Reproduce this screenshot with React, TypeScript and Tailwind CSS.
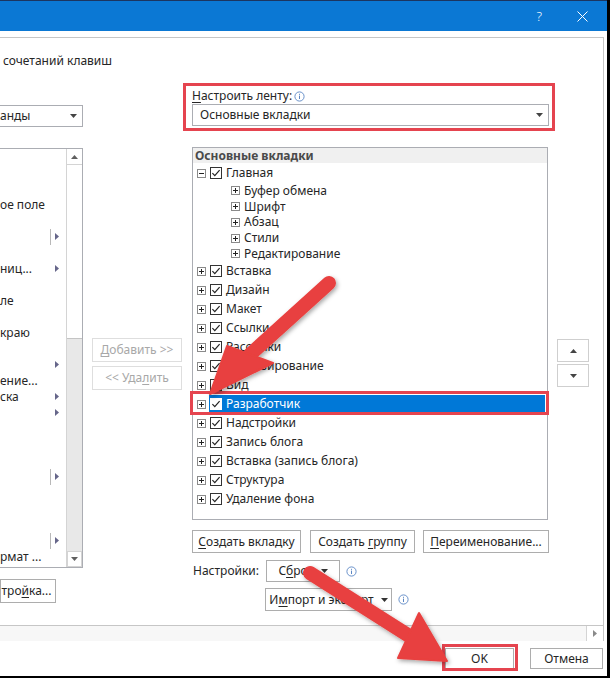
import React from 'react';

const Info = () => (
  <svg width="11" height="11" viewBox="0 0 11 11" className="shrink-0">
    <circle cx="5.5" cy="5.5" r="4.6" fill="none" stroke="#5a86c4" strokeWidth="0.9" />
    <rect x="5" y="4.6" width="1" height="3.4" fill="#5a86c4" />
    <rect x="5" y="2.8" width="1" height="1" fill="#5a86c4" />
  </svg>
);

const Down = ({ c = '#444' }: { c?: string }) => (
  <svg width="7" height="4" viewBox="0 0 7 4" className="shrink-0">
    <path d="M0 0 L7 0 L3.5 4 Z" fill={c} />
  </svg>
);

const Up = ({ c = '#444' }: { c?: string }) => (
  <svg width="7" height="4" viewBox="0 0 7 4" className="shrink-0">
    <path d="M0 4 L7 4 L3.5 0 Z" fill={c} />
  </svg>
);

const Right = ({ c = '#66668a' }: { c?: string }) => (
  <svg width="4" height="7" viewBox="0 0 4 7" className="shrink-0">
    <path d="M0 0 L4 3.5 L0 7 Z" fill={c} />
  </svg>
);

const Exp = ({ open = false }: { open?: boolean }) => (
  <svg width="9" height="9" viewBox="0 0 9 9" className="shrink-0">
    <rect x="0.5" y="0.5" width="8" height="8" fill="#fff" stroke="#8a8a8a" />
    <rect x="2" y="4" width="5" height="1" fill="#222" />
    {!open && <rect x="4" y="2" width="1" height="5" fill="#222" />}
  </svg>
);

const Check = ({ sel = false }: { sel?: boolean }) => (
  <svg width="12" height="12" viewBox="0 0 12 12" className="shrink-0">
    <rect x="0.5" y="0.5" width="11" height="11" fill="#fff" stroke={sel ? '#fff' : '#333'} />
    <path d="M2.4 6.2 L4.8 8.6 L9.6 3.2" fill="none" stroke="#222" strokeWidth="1.2" />
  </svg>
);

const U = ({ children }: { children: React.ReactNode }) => <span className="underline underline-offset-2">{children}</span>;

const Btn = ({ children, w, dis = false }: { children: React.ReactNode; w: string; dis?: boolean }) => (
  <div
    className={`${w} h-full flex items-center justify-center gap-[7px] border bg-white ${
      dis ? 'border-[#dedede] text-[#a8a8a8]' : 'border-[#adadad] text-[#262626]'
    }`}
  >
    {children}
  </div>
);

const top = [
  'Вставка',
  'Дизайн',
  'Макет',
  'Ссылки',
  'Рассылки',
  'Рецензирование',
  'Вид',
  'Разработчик',
  'Надстройки',
  'Запись блога',
  'Вставка (запись блога)',
  'Структура',
  'Удаление фона',
];

const subs = ['Буфер обмена', 'Шрифт', 'Абзац', 'Стили', 'Редактирование'];

// visible bits of the command list, 16px rows
const leftRows: { t?: string; arrow?: boolean; line?: boolean }[] = [
  {}, {}, {},
  { t: 'ое поле' },
  {},
  { arrow: true, line: true },
  {},
  { t: 'ниц...', arrow: true },
  {},
  { t: 'ле' },
  {},
  { t: 'краю' },
  {},
  { arrow: true },
  { t: 'ение...' },
  { t: 'ска', arrow: true },
  { arrow: true },
  {}, {}, {},
  { arrow: true, line: true },
  {}, {}, {},
  { arrow: true, line: true },
  { t: 'рмат ...' },
];

type P = [number, number];

const Arrow = ({ tail, tip, w1, w2 }: { tail: P; tip: P; w1: P; w2: P }) => {
  const mx = (w1[0] + w2[0]) / 2;
  const my = (w1[1] + w2[1]) / 2;
  return (
    <>
      <line x1={tail[0]} y1={tail[1]} x2={mx} y2={my} strokeWidth="14" strokeLinecap="round" />
      <polygon points={`${tip[0]},${tip[1]} ${w1[0]},${w1[1]} ${w2[0]},${w2[1]}`} strokeWidth="2" strokeLinejoin="round" />
    </>
  );
};

const Arrows = () => (
  <svg width="610" height="678" className="absolute left-0 top-0 pointer-events-none">
    <defs>
      <filter id="sh" x="-20%" y="-20%" width="140%" height="140%">
        <feDropShadow dx="1.5" dy="2" stdDeviation="2" floodColor="#000" floodOpacity="0.35" />
      </filter>
    </defs>
    <g filter="url(#sh)" fill="#e8403f" stroke="#e8403f">
      <Arrow tail={[329, 283]} tip={[210, 394]} w1={[227, 346]} w2={[273, 363]} />
      <Arrow tail={[310, 573]} tip={[447, 661]} w1={[419, 613]} w2={[398, 658]} />
    </g>
  </svg>
);

export default function App() {
  return (
    <div className="relative w-[610px] h-[678px] overflow-hidden bg-white border-r-[3px] border-b-[2px] border-black font-['Noto_Sans',sans-serif] text-[12px] leading-none text-[#262626]">
      {/* title bar */}
      <div className="h-[31px] bg-[#0b78d4] border-t border-[#1c3560] flex items-center justify-end text-white">
        <span className="text-[13px] mr-[35px] font-light">?</span>
        <svg width="11" height="11" viewBox="0 0 11 11" className="mr-[19px]">
          <path d="M0.5 0.5 L10.5 10.5 M10.5 0.5 L0.5 10.5" stroke="#fff" strokeWidth="1" />
        </svg>
      </div>

      {/* main pane */}
      <div className="mt-[6px] w-[604px] h-[604px] border-t border-r border-[#c6c6c6] flex flex-col">
        <div className="mt-[14px] h-[18px] pl-[3px] flex items-center">сочетаний клавиш</div>

        <div className="mt-[14px] flex">
          {/* left column */}
          <div className="w-[83px] flex flex-col">
            <div className="mt-[21px] h-[22px] border border-[#abadb3] border-l-0 flex items-center justify-between pr-[5px]">
              <span>анды</span>
              <Down />
            </div>
            <div className="mt-[21px] h-[420px] border border-[#abadb3] border-l-0 flex">
              <div className="flex-1 flex flex-col">
                {leftRows.map((r, i) => (
                  <div key={i} className="h-[16px] flex items-center relative">
                    {r.t && <span className="whitespace-nowrap">{r.t}</span>}
                    {r.line && <span className="absolute left-[50px] top-0 w-px h-[16px] bg-[#b8b8b8]" />}
                    {r.arrow && (
                      <span className="absolute left-[55px] top-[4px]">
                        <Right />
                      </span>
                    )}
                  </div>
                ))}
              </div>
              <div className="w-[16px] border-l border-[#d4d4d4] bg-[#e8e8e8] flex flex-col">
                <div className="h-[16px] bg-white flex items-center justify-center border-b border-[#d4d4d4]">
                  <Up c="#606060" />
                </div>
                <div className="h-[174px] bg-white border-b border-[#c4c4c4]" />
                <div className="flex-1" />
                <div className="h-[16px] bg-white border border-[#d4d4d4] flex items-center justify-center">
                  <Down c="#606060" />
                </div>
              </div>
            </div>
            <div className="mt-[11px] h-[24px] w-[56px]">
              <Btn w="w-full">
                <span className="-ml-[3px]">
                  тро<U>й</U>ка...
                </span>
              </Btn>
            </div>
          </div>

          {/* middle column */}
          <div className="w-[109px] flex flex-col pl-[9px] pt-[254px] gap-[4px]">
            <div className="h-[24px]">
              <Btn w="w-[90px]" dis>
                <span>
                  <U>Д</U>обавить &gt;&gt;
                </span>
              </Btn>
            </div>
            <div className="h-[24px]">
              <Btn w="w-[90px]" dis>
                <span>
                  &lt;&lt; Уда<U>л</U>ить
                </span>
              </Btn>
            </div>
          </div>

          {/* right column */}
          <div className="w-[357px] flex flex-col">
            <div className="mt-[5px] h-[14px] flex items-center gap-[2px] text-[#262626]">
              <span>
                <U>Н</U>астроить ленту:
              </span>
              <Info />
            </div>
            <div className="mt-[1px] h-[22px] border border-[#abadb3] flex items-center justify-between pl-[7px] pr-[5px]">
              <span>Основные вкладки</span>
              <Down />
            </div>
            <div className="mt-[21px] h-[373px] w-[356px] border border-[#abadb3] flex flex-col">
              <div className="h-[15px] bg-[#f0f0f0] flex items-center pl-[2px] font-bold text-[#4a4a4a]">Основные вкладки</div>
              <div className="h-[20px] flex items-center pl-[4px] gap-[4px]">
                <Exp open />
                <Check />
                <span>Главная</span>
              </div>
              {subs.map((s) => (
                <div key={s} className="h-[15.75px] flex items-center pl-[38px] gap-[4px]">
                  <Exp />
                  <span>{s}</span>
                </div>
              ))}
              {top.map((t) => {
                const sel = t === 'Разработчик';
                return (
                  <div key={t} className="h-[19px] flex items-center pl-[4px] gap-[3px]">
                    <Exp />
                    <div className={`flex-1 h-[18px] flex items-center gap-[4px] pl-[1px] mr-[2px] ${sel ? 'bg-[#0078d7] text-white' : ''}`}>
                      <Check sel={sel} />
                      <span>{t}</span>
                    </div>
                  </div>
                );
              })}
            </div>
            <div className="mt-[10px] h-[23px] flex">
              <Btn w="w-[109px]">
                <span>
                  <U>С</U>оздать вкладку
                </span>
              </Btn>
              <div className="ml-[9px] h-full">
                <Btn w="w-[105px]">
                  <span>
                    Создать <U>г</U>руппу
                  </span>
                </Btn>
              </div>
              <div className="ml-[8px] h-full">
                <Btn w="w-[126px]">
                  <span>
                    <U>П</U>ереименование...
                  </span>
                </Btn>
              </div>
            </div>
            <div className="mt-[7px] h-[22px] flex items-center">
              <span className="w-[74px] pl-[1px]">Настройки:</span>
              <div className="h-full">
                <Btn w="w-[74px]">
                  <span>
                    С<U>б</U>рос
                  </span>
                  <Down c="#333" />
                </Btn>
              </div>
              <span className="ml-[6px]">
                <Info />
              </span>
            </div>
            <div className="mt-[6px] h-[23px] flex items-center pl-[73px]">
              <div className="h-full">
                <Btn w="w-[127px]">
                  <span>
                    И<U>м</U>порт и экспорт
                  </span>
                  <Down c="#333" />
                </Btn>
              </div>
              <span className="ml-[6px]">
                <Info />
              </span>
            </div>
          </div>

          {/* far right column */}
          <div className="ml-[8px] pt-[255px] flex flex-col gap-[2px]">
            <div className="w-[32px] h-[23px] border border-[#cfcfcf] flex items-center justify-center">
              <Up />
            </div>
            <div className="w-[32px] h-[23px] border border-[#cfcfcf] flex items-center justify-center">
              <Down />
            </div>
          </div>
        </div>

        {/* horizontal scrollbar */}
        <div className="mt-auto h-[16px] border-t border-[#c6c6c6] bg-[#f7f7f7] flex justify-end">
          <div className="w-[17px] h-full border-l border-[#d4d4d4] bg-white flex items-center justify-center">
            <Right c="#8a8a8a" />
          </div>
        </div>
      </div>

      {/* footer */}
      <div className="mt-[7px] h-[21px] flex justify-end pr-[4px] gap-[16px]">
        <Btn w="w-[69px]">OK</Btn>
        <Btn w="w-[73px]">Отмена</Btn>
      </div>

      {/* annotations */}
      <div className="absolute left-[183px] top-[83px] w-[372px] h-[48px] border-[3px] border-[#e5444f]" />
      <div className="absolute left-[190px] top-[391px] w-[359px] h-[24px] border-[3px] border-[#e5444f]" />
      <div className="absolute left-[442px] top-[644px] w-[76px] h-[27px] border-[3px] border-[#e5444f]" />
      <Arrows />
    </div>
  );
}
